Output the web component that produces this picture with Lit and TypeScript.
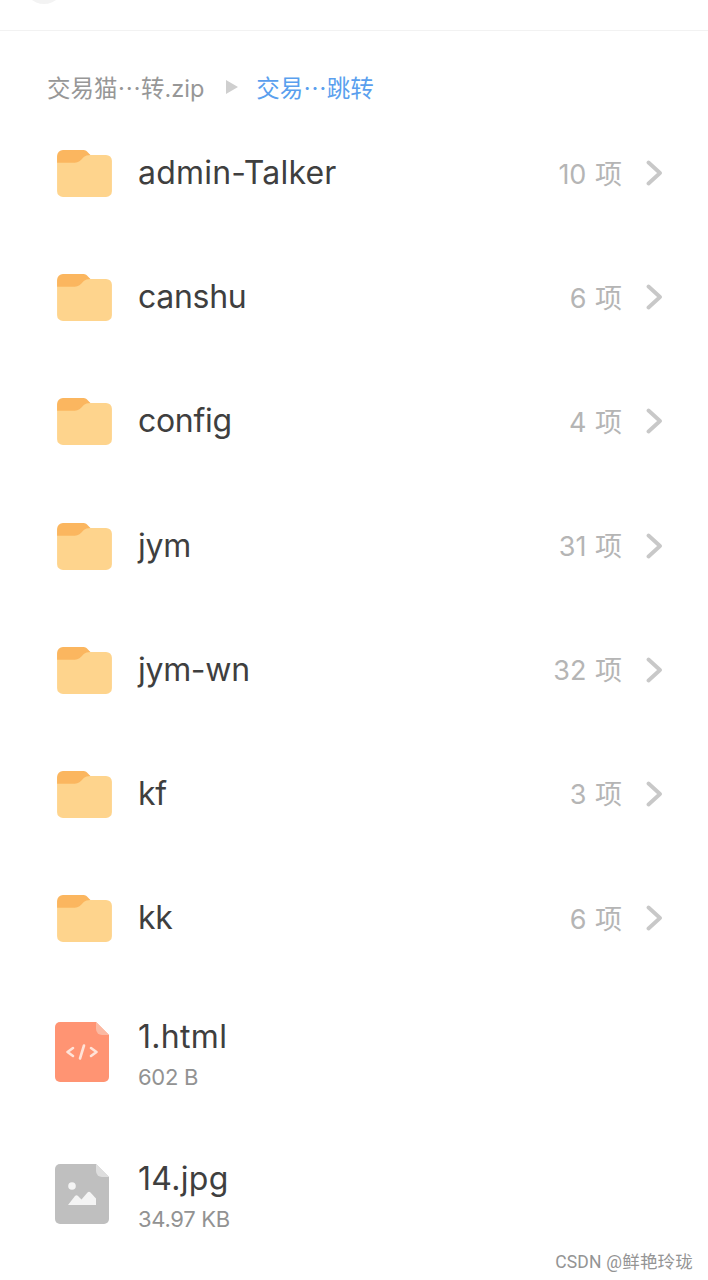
import { LitElement, html, css, svg } from "lit";
import { customElement } from "lit/decorators.js";

const folders = [
  ["admin-Talker", "10 项"],
  ["canshu", "6 项"],
  ["config", "4 项"],
  ["jym", "31 项"],
  ["jym-wn", "32 项"],
  ["kf", "3 项"],
  ["kk", "6 项"],
];

const folderIcon = svg`<svg width="55" height="47" viewBox="0 0 56 48">
  <path d="M0 8a6 6 0 0 1 6-6h23l5 3h16a6 6 0 0 1 6 6v31a6 6 0 0 1-6 6H6a6 6 0 0 1-6-6z" fill="#fed48d"/>
  <path d="M0 13V6a6 6 0 0 1 6-6h21c2 0 3.500 1 5 3l2 2c-3 0-5 .8-7 2.500-3 3.500-5 5.500-9 5.500z" fill="#fbb65f"/>
</svg>`;

const htmlIcon = svg`<svg width="54" height="60" viewBox="0 0 54 60">
  <path d="M5 0h36l13 13v42a5 5 0 0 1-5 5H5a5 5 0 0 1-5-5V5a5 5 0 0 1 5-5z" fill="#ff9473"/>
  <path d="M41 0l13 13H47a6 6 0 0 1-6-6z" fill="#fbb9a2"/>
  <path d="M18 26l-5.500 4 5.500 4M36 26l5.500 4-5.500 4M29 23.500l-4 13" fill="none" stroke="#ffe3d8" stroke-width="2.600" stroke-linecap="round" stroke-linejoin="round"/>
</svg>`;

const imageIcon = svg`<svg width="54" height="60" viewBox="0 0 54 60">
  <path d="M5 0h36l13 13v42a5 5 0 0 1-5 5H5a5 5 0 0 1-5-5V5a5 5 0 0 1 5-5z" fill="#bfbfbf"/>
  <path d="M41 0l13 13H47a6 6 0 0 1-6-6z" fill="#dedede"/>
  <circle cx="17" cy="22" r="3.800" fill="#f4f4f4"/>
  <path d="M13 41l7-9c1-1 2-1 3 0l3.500 3.500 6-7c1-1 2-1 3 0l5.500 6V41z" fill="#f4f4f4"/>
</svg>`;

@customElement("app-root")
export class AppRoot extends LitElement {
  static styles = css`
    :host {
      display: block;
      position: relative;
      width: 708px;
      height: 1280px;
      overflow: hidden;
      background: #fff;
      font-family: "Inter", "Noto Sans CJK SC", sans-serif;
    }
    .top {
      height: 30px;
      border-bottom: 1px solid #f2f2f2;
      position: relative;
    }
    .back {
      position: absolute;
      left: 24px;
      top: -36px;
      width: 40px;
      height: 40px;
      border-radius: 50%;
      background: #f3f3f3;
    }
    .crumbs {
      display: flex;
      align-items: center;
      height: 80px;
      padding: 35px 0 0 47px;
      font-size: 23.5px;
      line-height: 46px;
      color: #979797;
      box-sizing: border-box;
    }
    .crumbs .arrow {
      margin: 0 18px 0 22px;
      width: 0;
      height: 0;
      border-left: 12px solid #cfcfcf;
      border-top: 7px solid transparent;
      border-bottom: 7px solid transparent;
      position: relative;
      top: -2px;
    }
    .crumbs .active {
      color: #5a9fee;
    }
    .row {
      display: flex;
      align-items: center;
      height: 124.170px;
      padding-left: 57px;
      padding-right: 45px;
      box-sizing: border-box;
    }
    .row.file {
      height: 142px;
      padding-left: 55px;
    }
    .row .icon {
      flex: none;
      display: flex;
      width: 56px;
      padding-top: 1px;
    }
    .row.file .icon {
      width: 54px;
    }
    .body {
      flex: 1;
      margin-left: 25px;
      min-width: 0;
    }
    .row.file .body {
      margin-left: 29px;
      padding-top: 6px;
    }
    .name {
      font-size: 32px;
      line-height: 40px;
      letter-spacing: -0.3px;
      color: #3f3f3f;
    }
    .name.wide {
      letter-spacing: 0.2px;
    }
    .row.file .name {
      letter-spacing: 0.3px;
    }
    .size {
      font-size: 22px;
      line-height: 30px;
      letter-spacing: -0.3px;
      color: #929292;
      margin-top: 5px;
    }
    .count {
      font-size: 27px;
      color: #b5b5b5;
      word-spacing: 1px;
      margin-bottom: 2px;
    }
    .chev {
      display: flex;
      margin-left: 24px;
    }
    .mark {
      position: absolute;
      right: 15px;
      top: 1251px;
      font-family: "Roboto", "Noto Sans CJK SC", sans-serif;
      font-size: 17.5px;
      line-height: 22px;
      letter-spacing: 0.2px;
      color: #949494;
    }
  `;

  render() {
    return html`
      <div class="top"><div class="back"></div></div>
      <div class="crumbs">
        <span>交易猫⋯转.zip</span>
        <span class="arrow"></span>
        <span class="active">交易⋯跳转</span>
      </div>
      ${folders.map(
        ([name, count]) => html`
          <div class="row">
            <div class="icon">${folderIcon}</div>
            <div class="body"><div class="name ${name === "admin-Talker" ? "wide" : ""}">${name}</div></div>
            <div class="count">${count}</div>
            <div class="chev">
              <svg width="17" height="26" viewBox="0 0 17 26">
                <path d="M2.500 2.500L14 13 2.500 23.500" fill="none" stroke="#c8c8c8" stroke-width="3.800" stroke-linecap="round" stroke-linejoin="round"/>
              </svg>
            </div>
          </div>
        `
      )}
      <div class="row file">
        <div class="icon">${htmlIcon}</div>
        <div class="body"><div class="name">1.html</div><div class="size">602 B</div></div>
      </div>
      <div class="row file">
        <div class="icon">${imageIcon}</div>
        <div class="body"><div class="name">14.jpg</div><div class="size">34.97 KB</div></div>
      </div>
      <div class="mark">CSDN @鲜艳玲珑</div>
    `;
  }
}
